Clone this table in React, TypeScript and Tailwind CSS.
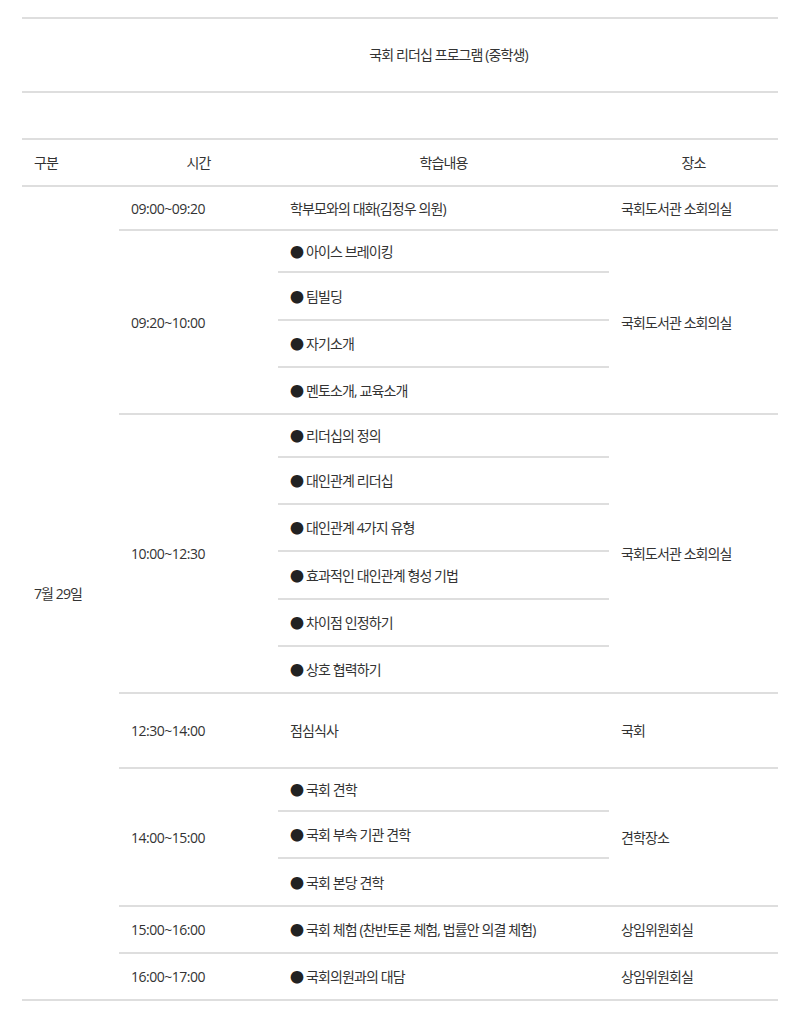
type Item = { text: string; bullet: boolean; h: string };

interface Group {
  time: string;
  place: string;
  items: Item[];
}

const groups: Group[] = [
  {
    time: "09:00~09:20",
    place: "국회도서관 소회의실",
    items: [{ text: "학부모와의 대화(김정우 의원)", bullet: false, h: "h-[42px]" }],
  },
  {
    time: "09:20~10:00",
    place: "국회도서관 소회의실",
    items: [
      { text: "아이스 브레이킹", bullet: true, h: "h-[42px]" },
      { text: "팀빌딩", bullet: true, h: "h-[48px]" },
      { text: "자기소개", bullet: true, h: "h-[47px]" },
      { text: "멘토소개, 교육소개", bullet: true, h: "h-[45px]" },
    ],
  },
  {
    time: "10:00~12:30",
    place: "국회도서관 소회의실",
    items: [
      { text: "리더십의 정의", bullet: true, h: "h-[43px]" },
      { text: "대인관계 리더십", bullet: true, h: "h-[47px]" },
      { text: "대인관계 4가지 유형", bullet: true, h: "h-[47px]" },
      { text: "효과적인 대인관계 형성 기법", bullet: true, h: "h-[48px]" },
      { text: "차이점 인정하기", bullet: true, h: "h-[47px]" },
      { text: "상호 협력하기", bullet: true, h: "h-[45px]" },
    ],
  },
  {
    time: "12:30~14:00",
    place: "국회",
    items: [{ text: "점심식사", bullet: false, h: "h-[73px]" }],
  },
  {
    time: "14:00~15:00",
    place: "견학장소",
    items: [
      { text: "국회 견학", bullet: true, h: "h-[43px]" },
      { text: "국회 부속 기관 견학", bullet: true, h: "h-[47px]" },
      { text: "국회 본당 견학", bullet: true, h: "h-[46px]" },
    ],
  },
  {
    time: "15:00~16:00",
    place: "상임위원회실",
    items: [{ text: "국회 체험 (찬반토론 체험, 법률안 의결 체험)", bullet: true, h: "h-[45px]" }],
  },
  {
    time: "16:00~17:00",
    place: "상임위원회실",
    items: [{ text: "국회의원과의 대담", bullet: true, h: "h-[45px]" }],
  },
];

const App = () => {
  return (
    <div className="min-h-[1024px] bg-white pt-[17px] font-['Open_Sans','Noto_Sans_CJK_KR',sans-serif] text-[14px] text-[#333] tracking-[-0.9px]">
      <div className="ml-[22px] mr-[19px]">
        {/* 제목 */}
        <div className="h-[76px] border-y-2 border-[#dedede] flex">
          <div className="w-[97px]" />
          <div className="flex-1 flex items-center justify-center pb-[2px]">국회 리더십 프로그램 (중학생)</div>
        </div>
        <div className="h-[47px] border-b-2 border-[#dedede]" />

        {/* 헤더 */}
        <div className="h-[47px] border-b-2 border-[#dedede] flex items-center pb-[1px]">
          <div className="w-[97px] px-3">구분</div>
          <div className="w-[159px] text-center">시간</div>
          <div className="w-[331px] text-center">학습내용</div>
          <div className="flex-1 text-center">장소</div>
        </div>

        {/* 본문 */}
        <div className="flex border-b-2 border-[#dedede]">
          <div className="w-[97px] px-3 flex items-center">7월 29일</div>
          <div className="flex-1 flex flex-col">
            {groups.map((g, i) => (
              <div
                key={g.time}
                className={`flex ${i < groups.length - 1 ? "border-b-2 border-[#dedede]" : ""}`}
              >
                <div className="w-[159px] px-3 flex items-center tracking-[-0.5px]">{g.time}</div>
                <div className="w-[331px] flex flex-col">
                  {g.items.map((it, j) => (
                    <div
                      key={it.text}
                      className={`${it.h} px-3 flex items-center ${
                        j < g.items.length - 1 ? "border-b-2 border-[#dedede]" : ""
                      }`}
                    >
                      {it.bullet && <span className="mr-[3px] text-[#222]">●</span>}
                      {it.text}
                    </div>
                  ))}
                </div>
                <div className="flex-1 px-3 flex items-center">{g.place}</div>
              </div>
            ))}
          </div>
        </div>
      </div>
    </div>
  );
};

export default App;
